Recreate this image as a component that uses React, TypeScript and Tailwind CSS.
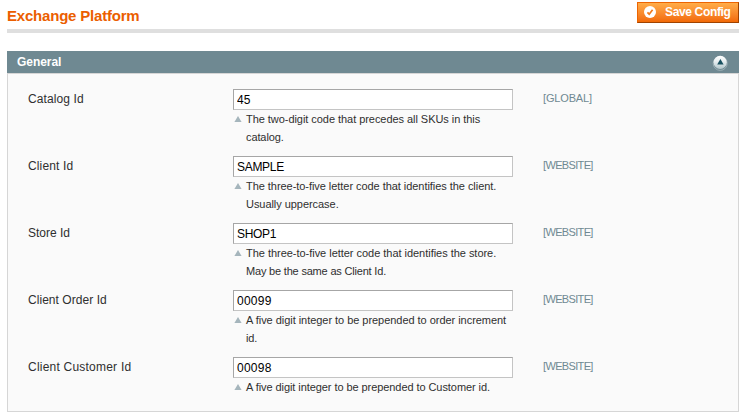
type Field = {
  label: string;
  labelSpacing: string;
  value: string;
  valueSpacing: string;
  note: { text: string; spacing: string }[];
  scope: string;
  scopeSpacing: string;
};

const fields: Field[] = [
  {
    label: "Catalog Id",
    labelSpacing: "tracking-[0.1px]",
    value: "45",
    valueSpacing: "tracking-[0.1px]",
    note: [
      { text: "The two-digit code that precedes all SKUs in this", spacing: "tracking-[-0.05px]" },
      { text: "catalog.", spacing: "tracking-[-0.1px]" },
    ],
    scope: "[GLOBAL]",
    scopeSpacing: "tracking-[-0.15px]",
  },
  {
    label: "Client Id",
    labelSpacing: "tracking-[0.13px]",
    value: "SAMPLE",
    valueSpacing: "tracking-[-0.3px]",
    note: [
      { text: "The three-to-five letter code that identifies the client.", spacing: "tracking-[-0.05px]" },
      { text: "Usually uppercase.", spacing: "tracking-[-0.05px]" },
    ],
    scope: "[WEBSITE]",
    scopeSpacing: "tracking-[-0.65px]",
  },
  {
    label: "Store Id",
    labelSpacing: "tracking-normal",
    value: "SHOP1",
    valueSpacing: "tracking-[-0.3px]",
    note: [
      { text: "The three-to-five letter code that identifies the store.", spacing: "tracking-[-0.03px]" },
      { text: "May be the same as Client Id.", spacing: "tracking-[-0.19px]" },
    ],
    scope: "[WEBSITE]",
    scopeSpacing: "tracking-[-0.65px]",
  },
  {
    label: "Client Order Id",
    labelSpacing: "tracking-[0.05px]",
    value: "00099",
    valueSpacing: "tracking-[0.25px]",
    note: [
      { text: "A five digit integer to be prepended to order increment", spacing: "tracking-[-0.04px]" },
      { text: "id.", spacing: "tracking-[-0.1px]" },
    ],
    scope: "[WEBSITE]",
    scopeSpacing: "tracking-[-0.65px]",
  },
  {
    label: "Client Customer Id",
    labelSpacing: "tracking-[0.22px]",
    value: "00098",
    valueSpacing: "tracking-[0.25px]",
    note: [{ text: "A five digit integer to be prepended to Customer id.", spacing: "tracking-[-0.07px]" }],
    scope: "[WEBSITE]",
    scopeSpacing: "tracking-[-0.65px]",
  },
];

function SaveIcon() {
  return (
    <svg width="12" height="12" viewBox="0 0 12 12" className="-mt-px shrink-0">
      <circle cx="6" cy="6" r="6" fill="#fff" />
      <path d="M3.4 6.3 5.2 8.2 8.6 3.8" fill="none" stroke="#f27a1a" strokeWidth="1.7" />
    </svg>
  );
}

function CollapseIcon() {
  return (
    <svg width="16" height="17" viewBox="0 0 16 17">
      <defs>
        <linearGradient id="knob" x1="0" y1="0" x2="0" y2="1">
          <stop offset="0" stopColor="#ffffff" />
          <stop offset="0.4" stopColor="#e9eff1" />
          <stop offset="1" stopColor="#b3c7cc" />
        </linearGradient>
      </defs>
      <circle cx="8.2" cy="9.4" r="7" fill="#6f8992" stroke="#9fb3b9" strokeWidth="0.9" />
      <circle cx="8.2" cy="8.4" r="6.6" fill="url(#knob)" />
      <path d="M8.4 5 11.6 10.6H5.2Z" fill="#17505f" />
    </svg>
  );
}

function FieldRow({ field }: { field: Field }) {
  return (
    <div className="flex items-start pb-[10px]">
      <label className={`w-[205px] shrink-0 pt-px text-[12px] leading-[18px] text-[#2f2f2f] ${field.labelSpacing}`}>
        {field.label}
      </label>
      <div className="w-[280px] shrink-0">
        <input
          defaultValue={field.value}
          aria-label={field.label}
          className={`block h-[21px] w-full border border-[#c4c4c4] border-t-[#a6a6a6] border-l-[#a6a6a6] bg-white px-[3px] pt-px text-[12px] leading-[18px] text-black outline-none ${field.valueSpacing}`}
        />
        <div className="flex text-[11px] leading-[18px] text-[#2f2f2f]">
          <svg width="13" height="18" viewBox="0 0 13 18" className="shrink-0">
            <path d="M5 6 8.6 12H1.4Z" fill="#a5b5bc" />
          </svg>
          <p className="whitespace-nowrap">
            {field.note.map((line) => (
              <span key={line.text} className={`block ${line.spacing}`}>
                {line.text}
              </span>
            ))}
          </p>
        </div>
      </div>
      <span className={`pl-[30px] text-[11px] leading-[18px] text-[#6f8992] ${field.scopeSpacing}`}>{field.scope}</span>
    </div>
  );
}

export default function App() {
  return (
    <main className="h-[417px] w-[745px] overflow-hidden bg-white pr-[6px] pl-[7px] font-['Liberation_Sans',Arial,sans-serif]">
      <header className="flex h-[33px] items-start justify-between border-b-4 border-[#dfdfdf]">
        <h1 className="pt-[7px] text-[15px] leading-[18px] font-bold tracking-[-0.2px] text-[#eb5e00]">
          Exchange Platform
        </h1>
        <button className="mt-[2px] flex h-[21px] w-[102px] items-center border border-[#ed6502] border-r-[#a04300] border-b-[#a04300] bg-linear-to-b from-[#ffac47] to-[#f26a05] pl-[6px] text-[12px] font-bold text-white">
          <SaveIcon />
          <span className="-mt-px pl-[9px] leading-[18px] tracking-[-0.35px] whitespace-nowrap">Save Config</span>
        </button>
      </header>
      <section className="mt-[18px]">
        <div className="flex h-[22px] items-center justify-between bg-[#6f8992] pr-[11px] pl-[10px]">
          <h2 className="text-[12px] leading-[18px] font-bold tracking-[-0.05px] text-white">General</h2>
          <CollapseIcon />
        </div>
        <div className="h-[339px] border border-[#d6d6d6] bg-[#fafafa] pt-[15px] pl-[20px]">
          {fields.map((field) => (
            <FieldRow key={field.label} field={field} />
          ))}
        </div>
      </section>
    </main>
  );
}
